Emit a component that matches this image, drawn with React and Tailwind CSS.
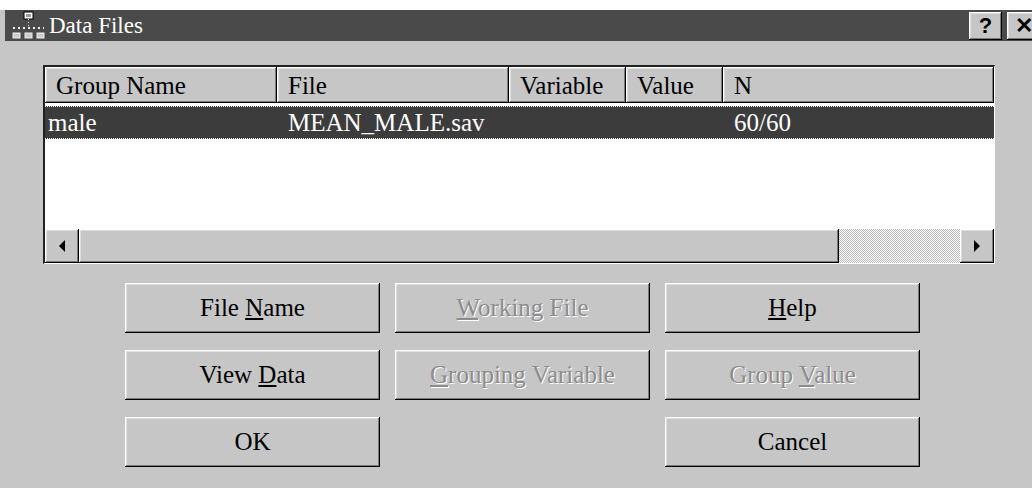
import React from "react";

// raised 3D edge used by buttons, headers and scroll parts
const raised =
  "shadow-[inset_-1px_-1px_0_#000,inset_1px_1px_0_#fff,inset_-2px_-2px_0_#7b7b7b,inset_2px_2px_0_#dedede]";

const columns = [
  { label: "Group Name", w: "w-[232px]" },
  { label: "File", w: "w-[232px]" },
  { label: "Variable", w: "w-[117px]" },
  { label: "Value", w: "w-[97px]" },
  { label: "N", w: "flex-1" },
];

function AppIcon() {
  return (
    <svg width="34" height="30" viewBox="0 0 34 30" className="shrink-0">
      <rect x="13" y="1" width="9" height="7" fill="#fff" stroke="#000" strokeWidth="1" />
      <rect x="15" y="3" width="5" height="3" fill="#9a9a9a" />
      <line x1="17.5" y1="8" x2="17.5" y2="17" stroke="#ddd" strokeDasharray="1 2" />
      <line x1="2" y1="17" x2="33" y2="17" stroke="#eee" strokeWidth="2" strokeDasharray="2 3" />
      <rect x="2" y="22" width="7" height="5" fill="#ccc" stroke="#eee" />
      <rect x="14" y="22" width="7" height="5" fill="#ccc" stroke="#eee" />
      <rect x="26" y="22" width="7" height="5" fill="#ccc" stroke="#eee" />
    </svg>
  );
}

function CaptionButton({ children }) {
  return (
    <div
      className={`w-[33px] h-[28px] bg-[#c6c6c6] ${raised} flex items-center justify-center text-black text-[22px] font-bold [font-family:Liberation_Sans,Arial,sans-serif] leading-none`}
    >
      {children}
    </div>
  );
}

function Button({ children, disabled }) {
  return (
    <div
      className={`h-[50px] bg-[#c6c6c6] ${raised} flex items-center justify-center text-[25px] ${
        disabled ? "text-[#8c8c8c] [text-shadow:1px_1px_0_#fff]" : "text-black"
      }`}
    >
      <span>{children}</span>
    </div>
  );
}

function ArrowButton({ dir }) {
  return (
    <div className={`w-[34px] h-[34px] bg-[#c6c6c6] ${raised} flex items-center justify-center`}>
      <svg width="8" height="12" viewBox="0 0 8 12">
        {dir === "left" ? (
          <polygon points="7,0 1,6 7,12" fill="#000" />
        ) : (
          <polygon points="1,0 7,6 1,12" fill="#000" />
        )}
      </svg>
    </div>
  );
}

export default function App() {
  return (
    <div className="w-[1032px] h-[488px] overflow-hidden bg-white pt-[10px] [font-family:Liberation_Serif,serif]">
      <div className="h-[478px] bg-[#c6c6c6] pl-[5px] flex flex-col">
        {/* title bar */}
        <div className="h-[31px] bg-[#4a4a4a] flex items-center pl-[6px]">
          <AppIcon />
          <span className="ml-[4px] text-white text-[23px] leading-none">Data Files</span>
          <div className="ml-auto flex items-center gap-[5px] -mr-[8px]">
            <CaptionButton>?</CaptionButton>
            <CaptionButton>✕</CaptionButton>
          </div>
        </div>

        {/* file list */}
        <div className="ml-[38px] mt-[24px] w-[952px] h-[199px] bg-white flex flex-col border-t-2 border-l-2 border-[#222] border-b border-r border-b-[#fff] border-r-[#fff]">
          <div className="h-[36px] flex shrink-0">
            {columns.map((c) => (
              <div
                key={c.label}
                className={`${c.w} h-full bg-[#c6c6c6] ${raised} flex items-center pl-[11px] text-[25px] text-black leading-none`}
              >
                {c.label}
              </div>
            ))}
          </div>
          <div className="mt-[3px] h-[33px] bg-[#3c3c3c] border-y border-dotted border-white flex items-center text-white text-[25px] leading-none">
            <span className="w-[243px] pl-[3px]">male</span>
            <span className="w-[446px]">MEAN_MALE.sav</span>
            <span>60/60</span>
          </div>
          <div className="flex-1" />
          <div className="h-[34px] flex shrink-0">
            <ArrowButton dir="left" />
            <div className={`w-[760px] h-full bg-[#c6c6c6] ${raised}`} />
            <div className="flex-1 h-full bg-[repeating-conic-gradient(#ffffff_0_25%,#bdbdbd_0_50%)] bg-[length:2px_2px]" />
            <ArrowButton dir="right" />
          </div>
        </div>

        {/* action buttons */}
        <div className="ml-[120px] mt-[19px] grid grid-cols-[255px_255px_255px] gap-x-[15px] gap-y-[17px]">
          <Button>
            File <u>N</u>ame
          </Button>
          <Button disabled>
            <u>W</u>orking File
          </Button>
          <Button>
            <u>H</u>elp
          </Button>
          <Button>
            View <u>D</u>ata
          </Button>
          <Button disabled>
            <u>G</u>rouping Variable
          </Button>
          <Button disabled>
            Group <u>V</u>alue
          </Button>
          <Button>OK</Button>
          <div />
          <Button>Cancel</Button>
        </div>
      </div>
    </div>
  );
}
